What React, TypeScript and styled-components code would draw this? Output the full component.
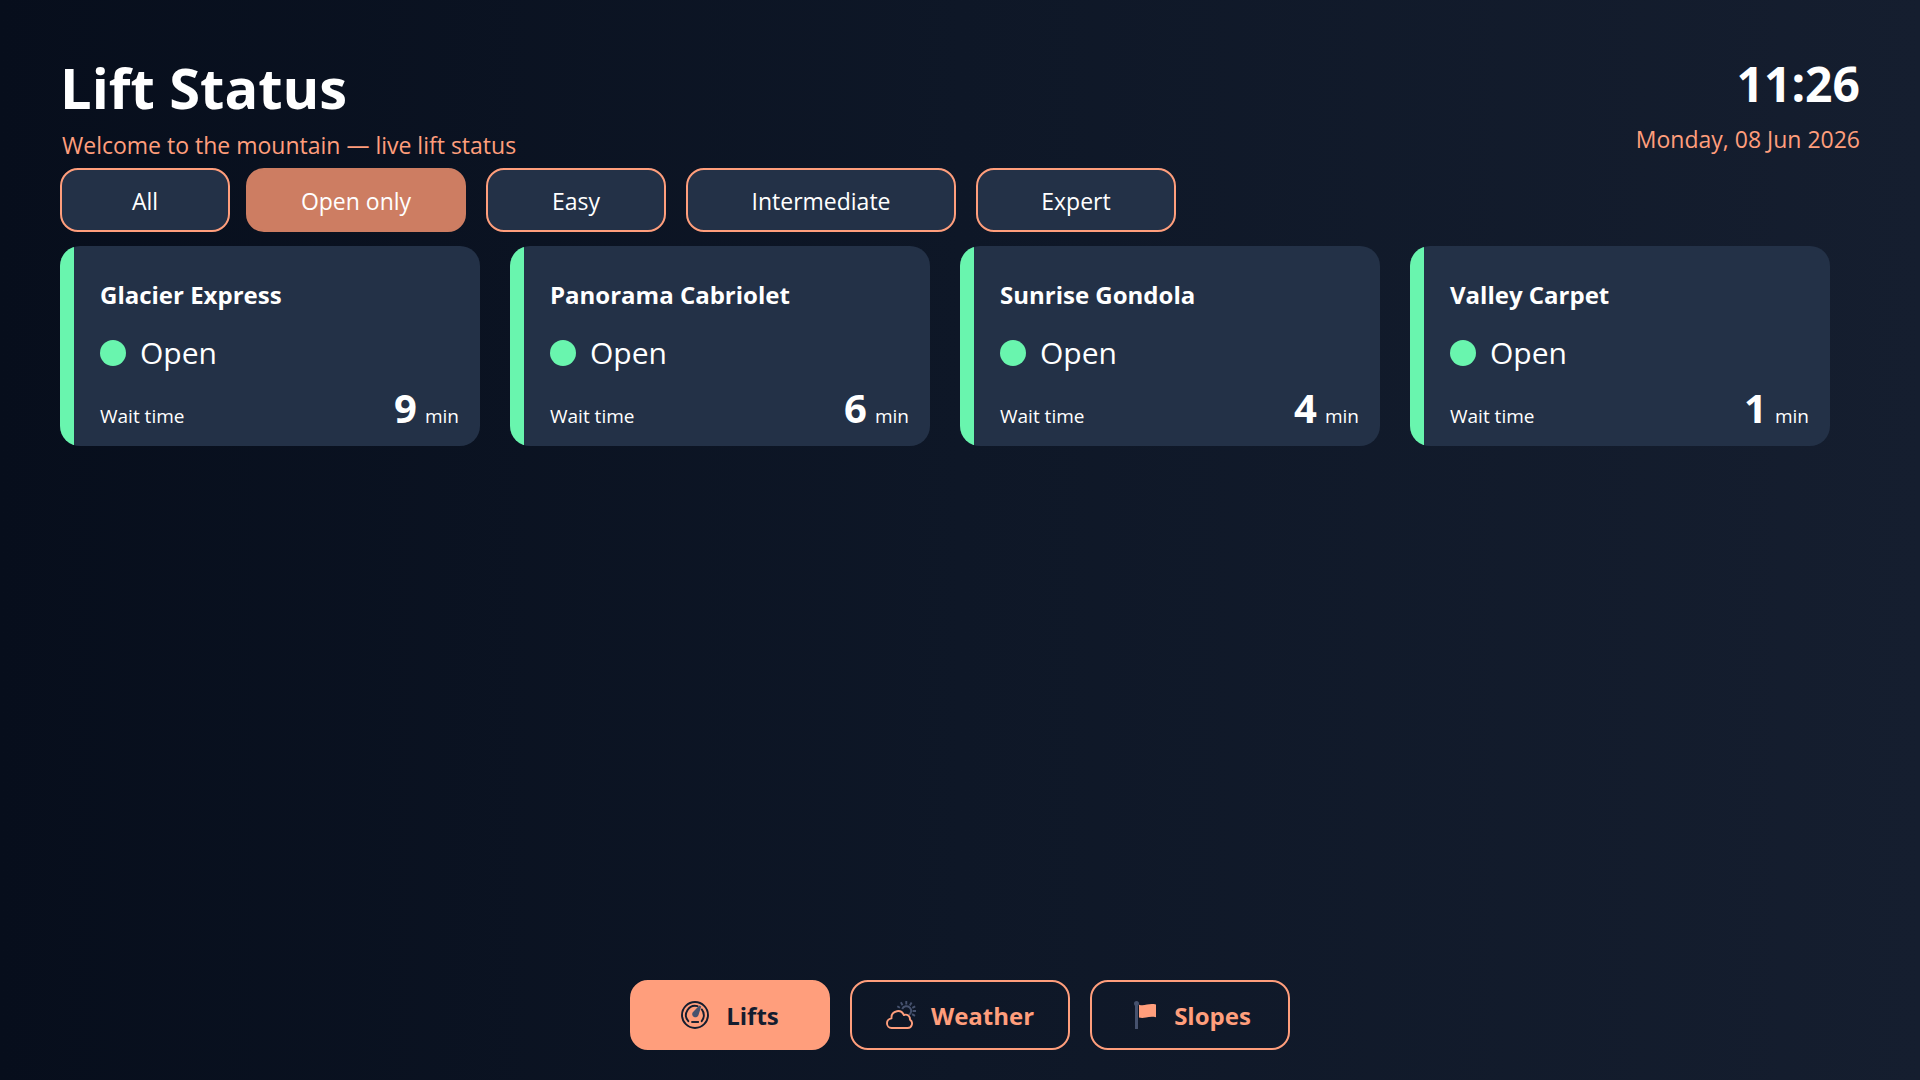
import React, { useState } from "react";
import styled, { createGlobalStyle } from "styled-components";

const accent = "#ff9e7c";
const panel = "#233147";
const ink = "#141d2f";
const muted = "#46526e";
const openGreen = "#69f5ae";

const GlobalStyle = createGlobalStyle`
  *, *::before, *::after { box-sizing: border-box; }
  body {
    margin: 0;
    color: #ffffff;
    background: #0e1727;
    font-family: "Segoe UI", "Open Sans", "Noto Sans", sans-serif;
  }
  h1, h2, p { margin: 0; }
`;

const Screen = styled.div`
  display: flex;
  flex-direction: column;
  min-height: 100vh;
  padding: 48px 60px 30px;
  background: linear-gradient(90deg, #070e1c 0%, #0e1727 50%, #151e2f 100%);
`;

const Header = styled.header`
  display: flex;
  justify-content: space-between;
  align-items: flex-start;
  height: 120px;
`;

const Title = styled.h1`
  font-size: 56px;
  font-weight: 700;
  line-height: 78px;
`;

const Caption = styled.p`
  padding-left: 2px;
  color: ${accent};
  font-size: 23px;
  font-weight: 400;
  line-height: 38px;
`;

const ClockPanel = styled.div`
  text-align: right;
`;

const Clock = styled.time`
  display: block;
  font-size: 48px;
  font-weight: 700;
  line-height: 72px;
`;

const Filters = styled.div`
  display: flex;
  flex-wrap: wrap;
  gap: 20px;
`;

const FilterButton = styled.button<{ $width: number; $active: boolean }>`
  width: ${(p) => p.$width}px;
  height: 64px;
  padding: 2px 0 0;
  border: 2px solid ${(p) => (p.$active ? "#cd7d62" : accent)};
  border-radius: 18px;
  background: ${(p) => (p.$active ? "#cd7d62" : panel)};
  color: #ffffff;
  font: inherit;
  font-size: 23px;
  cursor: pointer;

  &:first-child {
    margin-right: -4px;
  }
`;

const Lifts = styled.main`
  flex: 1;
  display: grid;
  grid-template-columns: repeat(auto-fill, 420px);
  align-content: start;
  gap: 30px;
  margin-top: 14px;
`;

const Card = styled.article`
  display: flex;
  overflow: hidden;
  height: 200px;
  border-radius: 20px;
  background: ${panel};
`;

const Stripe = styled.div`
  width: 14px;
  background: ${openGreen};
`;

const CardBody = styled.div`
  flex: 1;
  display: flex;
  flex-direction: column;
  padding: 31px 21px 8px 26px;
`;

const LiftName = styled.h2`
  font-size: 24px;
  font-weight: 700;
  line-height: 36px;
`;

const Status = styled.p`
  display: flex;
  align-items: center;
  gap: 14px;
  margin-top: 17px;
  font-size: 30px;
  font-weight: 400;
  line-height: 46px;
`;

const Dot = styled.span`
  width: 26px;
  height: 26px;
  border-radius: 50%;
  background: ${openGreen};
`;

const WaitRow = styled.div`
  display: flex;
  justify-content: space-between;
  align-items: baseline;
  margin-top: auto;
  font-size: 19px;
  line-height: 44px;
`;

const Wait = styled.span`
  display: flex;
  align-items: baseline;
  gap: 8px;
`;

const Minutes = styled.strong`
  font-size: 40px;
  font-weight: 700;
`;

const Nav = styled.nav`
  display: flex;
  justify-content: center;
  gap: 20px;
`;

const NavButton = styled.button<{ $wide?: boolean; $active: boolean }>`
  display: flex;
  align-items: center;
  justify-content: center;
  gap: 17px;
  width: ${(p) => (p.$wide ? 220 : 200)}px;
  height: 70px;
  padding: 0;
  border: 2px solid ${accent};
  border-radius: 18px;
  background: ${(p) => (p.$active ? accent : "transparent")};
  color: ${(p) => (p.$active ? ink : accent)};
  font: inherit;
  font-size: 24px;
  font-weight: 700;
  cursor: pointer;
`;

const Icon = styled.svg`
  width: 28px;
  height: 28px;
  fill: none;
  stroke-linecap: round;
  stroke-linejoin: round;
`;

const GaugeIcon = () => (
  <Icon viewBox="0 0 28 28" aria-hidden="true">
    <circle cx="14" cy="14" r="13" stroke="currentColor" strokeWidth="1.9" />
    <path d="M7.3 20.2A9.3 9.3 0 0 1 16.6 5.1M20.8 8.4A9.3 9.3 0 0 1 20.7 20.2" stroke="currentColor" strokeWidth="1.9" />
    <path d="M10.3 21h7.6" stroke="currentColor" strokeWidth="1.9" strokeLinecap="butt" />
    <path d="M18.4 4.4l1.8 1-2.700 8.600a3.200 3.200 0 1 1-5.700-2.700z" fill={muted} />
  </Icon>
);

const WeatherIcon = () => (
  <Icon viewBox="0 0 28 28" aria-hidden="true" overflow="visible">
    <path
      d="M16.2 8a4.7 4.7 0 1 1 6.6 6M20.3 0v3.6M14.9 1.3l1.6 3M25.6 1.5l-1.8 2.9M11.3 5.2l2.6 1.6M29.2 5.4l-2.9 1.5M30 10h-3.4M29 14.900l-2.900-1.800"
      stroke={muted}
      strokeWidth="1.9"
      strokeLinecap="butt"
    />
    <path
      d="M5.6 27h16a4.6 4.6 0 0 0 2.4-8.4c.2-3.7-3-5.9-6.1-4.6-1.5-3-4.2-4.3-7-3.8-3.6.7-5.7 3.6-5.4 7.2C2.6 17.9 1 19.9 1 22.2 1 24.9 3 27 5.6 27z"
      stroke="currentColor"
      strokeWidth="1.9"
    />
  </Icon>
);

const FlagIcon = () => (
  <Icon viewBox="0 0 28 28" aria-hidden="true">
    <path d="M6 2.5V28h3V2.5z" fill={muted} />
    <circle cx="7.5" cy="2.5" r="2.5" fill={muted} />
    <path d="M10 3.8c3 1 5 .5 8-.2 3-.7 6-.7 9-.1v12.7c-4-1-7-.3-10 .3-3 .6-5 .5-7 0z" fill="currentColor" />
  </Icon>
);

const filters = [
  { label: "All", width: 170 },
  { label: "Open only", width: 220 },
  { label: "Easy", width: 180 },
  { label: "Intermediate", width: 270 },
  { label: "Expert", width: 200 },
];

const lifts = [
  { name: "Glacier Express", wait: 9 },
  { name: "Panorama Cabriolet", wait: 6 },
  { name: "Sunrise Gondola", wait: 4 },
  { name: "Valley Carpet", wait: 1 },
];

const pages = [
  { label: "Lifts", icon: <GaugeIcon /> },
  { label: "Weather", icon: <WeatherIcon />, wide: true },
  { label: "Slopes", icon: <FlagIcon /> },
];

export default function App() {
  const [filter, setFilter] = useState("Open only");
  const [page, setPage] = useState("Lifts");

  return (
    <>
      <GlobalStyle />
      <Screen>
        <Header>
          <div>
            <Title>Lift Status</Title>
            <Caption>Welcome to the mountain — live lift status</Caption>
          </div>
          <ClockPanel>
            <Clock>11:26</Clock>
            <Caption>Monday, 08 Jun 2026</Caption>
          </ClockPanel>
        </Header>
        <Filters>
          {filters.map((f) => (
            <FilterButton
              key={f.label}
              type="button"
              $width={f.width}
              $active={f.label === filter}
              aria-pressed={f.label === filter}
              onClick={() => setFilter(f.label)}
            >
              {f.label}
            </FilterButton>
          ))}
        </Filters>
        <Lifts>
          {lifts.map((lift) => (
            <Card key={lift.name}>
              <Stripe />
              <CardBody>
                <LiftName>{lift.name}</LiftName>
                <Status>
                  <Dot />
                  Open
                </Status>
                <WaitRow>
                  <span>Wait time</span>
                  <Wait>
                    <Minutes>{lift.wait}</Minutes>
                    <span>min</span>
                  </Wait>
                </WaitRow>
              </CardBody>
            </Card>
          ))}
        </Lifts>
        <Nav>
          {pages.map((p) => (
            <NavButton
              key={p.label}
              type="button"
              $wide={p.wide}
              $active={p.label === page}
              onClick={() => setPage(p.label)}
            >
              {p.icon}
              {p.label}
            </NavButton>
          ))}
        </Nav>
      </Screen>
    </>
  );
}
